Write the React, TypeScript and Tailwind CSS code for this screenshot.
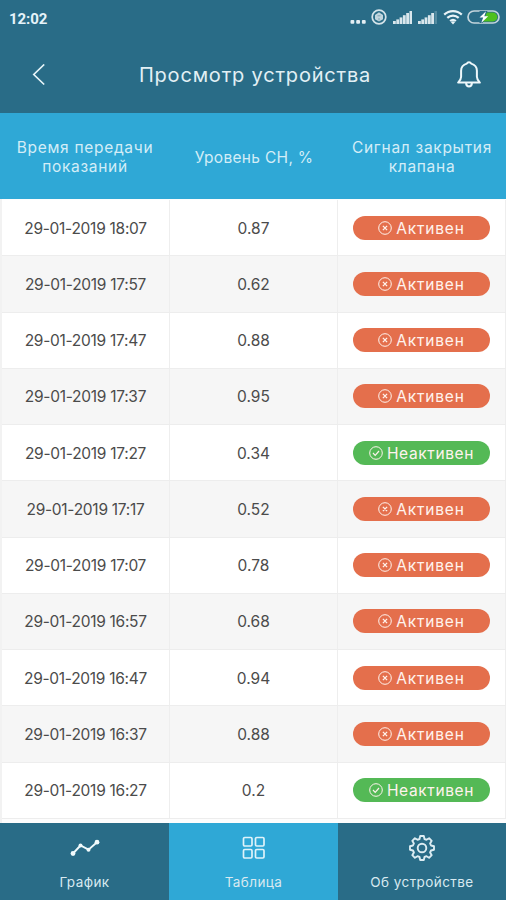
import type { ReactNode } from "react";

type Reading = { time: string; level: string; active: boolean };

const readings: Reading[] = [
  { time: "29-01-2019 18:07", level: "0.87", active: true },
  { time: "29-01-2019 17:57", level: "0.62", active: true },
  { time: "29-01-2019 17:47", level: "0.88", active: true },
  { time: "29-01-2019 17:37", level: "0.95", active: true },
  { time: "29-01-2019 17:27", level: "0.34", active: false },
  { time: "29-01-2019 17:17", level: "0.52", active: true },
  { time: "29-01-2019 17:07", level: "0.78", active: true },
  { time: "29-01-2019 16:57", level: "0.68", active: true },
  { time: "29-01-2019 16:47", level: "0.94", active: true },
  { time: "29-01-2019 16:37", level: "0.88", active: true },
  { time: "29-01-2019 16:27", level: "0.2", active: false },
];

function Signal({ faded = false }: { faded?: boolean }) {
  return (
    <svg width="20" height="14" viewBox="0 0 20 14" fill="#d9e7ed">
      <rect x="0" y="11" width="2.8" height="3" />
      <rect x="3.3" y="9.4" width="2.8" height="4.6" />
      <rect x="6.6" y="7.4" width="2.8" height="6.6" />
      <rect x="9.9" y="5.2" width="2.8" height="8.8" />
      <rect x="13.2" y="3" width="2.8" height="11" />
      <rect x="16.5" y="1" width="2.5" height="13" opacity={faded ? 0.25 : 1} />
    </svg>
  );
}

function StatusBar() {
  return (
    <div className="flex h-9 items-center justify-between pl-[9px] pr-[6px] font-['Roboto',sans-serif] text-white">
      <span className="pt-[2px] text-[15px] font-bold tracking-[-0.1px] text-[#e6f4fa]">12:02</span>
      <div className="flex items-center pb-[2px]">
        <svg width="17" height="14" viewBox="0 0 17 14" fill="#e3eef3">
          <rect x="0.5" y="10" width="3.8" height="3.8" rx="1" />
          <rect x="6.2" y="10" width="3.8" height="3.8" rx="1" />
          <rect x="11.9" y="10" width="3.8" height="3.8" rx="1" />
        </svg>
        <svg className="ml-[4px]" width="16" height="16" viewBox="0 0 16 16" fill="none" stroke="#d5e4ea">
          <circle cx="8" cy="8" r="6.8" strokeWidth="1.7" />
          <path d="M8 3.2 12 6v4.200L8 12.600 4 10.200V6Z" fill="#c2d6de" stroke="none" />
          <path d="M8 9v2.500M6.500 6.800h3" stroke="#7fa3b2" strokeWidth="1" />
        </svg>
        <span className="ml-[6px]"><Signal /></span>
        <span className="ml-[5px]"><Signal faded /></span>
        <svg className="ml-[5px]" width="20" height="16" viewBox="0 0 20 16" fill="none" stroke="#e8f3f7" strokeWidth="2.2">
          <path d="M1.2 5.6C6.2.9 13.8.9 18.8 5.6M4.3 8.9c3.3-3 8.1-3 11.4 0M7.1 12c1.8-1.500 4-1.500 5.800 0" />
          <path d="m10 15.6-2.200-2.500c1.200-1 3.200-1 4.400 0Z" fill="#e8f3f7" stroke="none" />
        </svg>
        <svg className="ml-[4px]" width="33" height="14" viewBox="0 0 33 14">
          <path d="M18 2.6h8a4.400 4.400 0 0 1 0 8.800H15Z" fill="#4fc01f" />
          <rect x="1" y="1" width="31" height="12" rx="6" fill="none" stroke="#c3d5dd" strokeWidth="1.7" />
          <path d="M12.500 1h8l-5 12h-3Z" fill="#296c87" />
          <path d="m19 1.200-6.500 6.400h3.700L14.200 13l7-6.700h-3.900Z" fill="#fff" />
        </svg>
      </div>
    </div>
  );
}

function TitleBar() {
  return (
    <header className="flex h-[77px] items-center justify-between pl-[32px] pr-[24px]">
      <svg width="14" height="22" viewBox="0 0 14 22" fill="none" stroke="#e6f4f8" strokeWidth="1.7">
        <path d="M12.200 0.500 1.800 10.500l10.400 10" />
      </svg>
      <h1 className="pl-[8px] text-[20px] leading-6 tracking-[0.8px] text-[#e2f0f5]">Просмотр устройства</h1>
      <svg width="26" height="28" viewBox="0 0 26 28" fill="none" stroke="#eef8fb" strokeWidth="2" strokeLinejoin="round">
        <path d="M10.800 2.600a2.400 2.400 0 0 1 4.400 0c3.800 1 5.700 3.600 5.700 7.200v6c0 2.200.9 3.800 3 5.800H2.100c2.100-2 3-3.600 3-5.800v-6c0-3.600 1.900-6.200 5.700-7.200Z" />
        <path d="M10 22c.3 2.300 1.500 3.500 3 3.500s2.700-1.200 3-3.500" />
      </svg>
    </header>
  );
}

function Badge({ active }: { active: boolean }) {
  return (
    <span className={`flex h-6 w-[137px] items-center justify-center gap-[4px] rounded-full text-[15.5px] leading-6 text-[#fff3ed] ${active ? "bg-[#e46f4c]" : "bg-[#54b956]"}`}>
      <svg width="14" height="14" viewBox="0 0 14 14" fill="none" stroke="currentColor">
        <circle cx="7" cy="7" r="6.3" strokeWidth="1" />
        {active ? <path d="m4.9 4.9 4.2 4.2m0-4.2L4.9 9.1" strokeWidth="1.3" /> : <path d="m4 7 2.2 2.3L10 5" strokeWidth="1.2" />}
      </svg>
      <span className={`pt-[2px] ${active ? "tracking-[0.8px]" : "tracking-[0.65px]"}`}>{active ? "Активен" : "Неактивен"}</span>
    </span>
  );
}

function Tab({ label, current = false, children }: { label: string; current?: boolean; children: ReactNode }) {
  return (
    <button className={`flex flex-col items-center pt-[11px] ${current ? "bg-[#2fa8d6]" : "bg-[#296c87]"}`}>
      <span className="flex h-7 items-center">{children}</span>
      <span className="mt-[10px] text-[13.5px] leading-5 tracking-[0.43px] text-[#d8e9f0]">{label}</span>
    </button>
  );
}

export default function App() {
  return (
    <div className="flex h-[900px] w-[506px] flex-col overflow-hidden bg-[#fdfdfd] font-['Inter',sans-serif]">
      <div className="h-[113px] shrink-0 bg-[#296c87]">
        <StatusBar />
        <TitleBar />
      </div>

      <div className="grid h-[86px] shrink-0 grid-cols-[170px_168px_168px] items-center bg-[#2fa8d6] pt-[2px] text-center text-[15.5px] leading-[19px] text-[#d3edf7]">
        <span className="tracking-[0.7px]">Время передачи<br />показаний</span>
        <span className="tracking-[0.3px]">Уровень СН, %</span>
        <span className="tracking-[0.7px]">Сигнал закрытия<br />клапана</span>
      </div>

      <div className="h-[624px] shrink-0 border-l-2 border-[#f2f2f2] pt-px">
        {readings.map((row, index) => (
          <div
            key={row.time}
            className={`grid h-[56.25px] grid-cols-[168px_168px_168px] border-b border-[#ededed] text-[15.5px] text-[#4b4b4b] ${index % 2 ? "bg-[#f6f6f6]" : "bg-white"}`}
          >
            <span className="flex items-center justify-center border-r border-[#eeeeee] pt-px tracking-[-0.28px]">{row.time}</span>
            <span className="flex items-center justify-center border-r border-[#eeeeee] pt-px">{row.level}</span>
            <span className="flex items-center justify-center border-r border-[#eeeeee]"><Badge active={row.active} /></span>
          </div>
        ))}
      </div>

      <nav className="grid h-[77px] shrink-0 grid-cols-[169px_169px_168px]">
        <Tab label="График">
          <svg width="30" height="18" viewBox="0 0 30 18" fill="none" stroke="#f0fafc" strokeWidth="1.9">
            <path d="m3 14.5 7.5-8 8 4.2L27 3.2" />
            <g fill="#f0fafc" stroke="none">
              <circle cx="3" cy="14.5" r="2.4" />
              <circle cx="10.5" cy="6.5" r="2" />
              <circle cx="18.5" cy="10.7" r="2" />
              <circle cx="27" cy="3.2" r="2.4" />
            </g>
          </svg>
        </Tab>
        <Tab label="Таблица" current>
          <svg width="24" height="24" viewBox="0 0 24 24" fill="none" stroke="#dff3fa" strokeWidth="1.7">
            <rect x="1.5" y="1.5" width="8.5" height="8.5" rx="1.2" />
            <rect x="13.5" y="1.5" width="8.5" height="8.5" rx="1.2" />
            <rect x="1.5" y="13.5" width="8.5" height="8.5" rx="1.2" />
            <rect x="13.5" y="13.5" width="8.5" height="8.5" rx="1.2" />
          </svg>
        </Tab>
        <Tab label="Об устройстве">
          <svg width="28" height="28" viewBox="0 0 28 28" fill="none" stroke="#dcecf2" strokeWidth="1.9" strokeLinejoin="round">
            <path d="M12.2 2h3.6l.7 3 2 .8 2.6-1.6 2.6 2.6-1.6 2.6.9 2.1 3 .7v3.6l-3 .7-.9 2 1.6 2.7-2.6 2.6-2.6-1.6-2 .8-.7 3h-3.6l-.7-3-2-.8-2.6 1.6-2.6-2.6 1.6-2.7-.9-2-3-.7v-3.6l3-.7.9-2.1-1.6-2.6 2.6-2.6 2.6 1.6 2-.8Z" />
            <circle cx="14" cy="14" r="4.3" />
          </svg>
        </Tab>
      </nav>
    </div>
  );
}
